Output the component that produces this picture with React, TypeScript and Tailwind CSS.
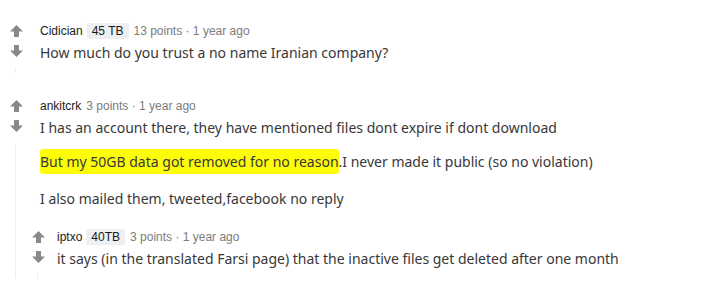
import type { ReactNode } from 'react'

const ARROW = '#878a8c'
const BODY = "text-[14px] leading-[21px] text-[#383838] font-['Noto_Sans',sans-serif]"

function Arrow({ down = false }: { down?: boolean }) {
  return (
    <svg width="13" height="12" viewBox="0 0 13 12" className={down ? 'rotate-180' : ''}>
      <path d="M6.5 0 L13 6.5 H9 V12 H4 V6.5 H0 Z" fill={ARROW} />
    </svg>
  )
}

function Votes() {
  return (
    <div className="flex w-6 shrink-0 flex-col items-center gap-[8px] pt-[2px]">
      <Arrow />
      <Arrow down />
    </div>
  )
}

function Meta({ user, flair, points }: { user: string; flair?: string; points: string }) {
  return (
    <div className="flex items-center text-[12px] leading-[16px] font-['Liberation_Sans',Arial,sans-serif]">
      <span className="text-[#1c1c1c]">{user}</span>
      {flair && (
        <span className="ml-[4px] rounded-[2px] bg-[#edeff1] px-[5px] text-[#1a1a1b]">{flair}</span>
      )}
      <span className="ml-[5px] text-[#7c7c7c]">{points} · 1 year ago</span>
    </div>
  )
}

function Comment({
  meta,
  gap,
  children,
}: {
  meta: ReactNode
  gap: string
  children: ReactNode
}) {
  return (
    <div className={`flex ${gap}`}>
      <Votes />
      <div className="flex flex-col">
        {meta}
        <div className={`mt-[3px] ${BODY}`}>{children}</div>
      </div>
    </div>
  )
}

export default function App() {
  return (
    <div className="h-[295px] w-[718px] overflow-hidden bg-white pl-[4px] pt-[23px]">
      <Comment gap="gap-[12px]" meta={<Meta user="Cidician" flair="45 TB" points="13 points" />}>
        <p>How much do you trust a no name Iranian company?</p>
      </Comment>
      <div className="ml-[11px] mt-[4px] h-[6px] w-[1px] bg-[#edeff1]" />

      <div className="mt-[25px]">
        <Comment gap="gap-[12px]" meta={<Meta user="ankitcrk" points="3 points" />}>
          <p>I has an account there, they have mentioned files dont expire if dont download</p>
        </Comment>
        <div className="flex">
          <div className="ml-[11px] mt-[6px] w-[1px] bg-[#edeff1]" />
          <div className="flex flex-col pl-[24px]">
            <p className={`mt-[13px] ${BODY}`}>
              <span className="rounded-[3px] bg-[#fdfd08] py-[3px]">
                But my 50GB data got removed for no reason
              </span>
              .I never made it public (so no violation)
            </p>
            <p className={`mt-[16px] ${BODY}`}>I also mailed them, tweeted,facebook no reply</p>
            <div className="ml-[-14px] mt-[20px]">
              <Comment gap="gap-[7px]" meta={<Meta user="iptxo" flair="40TB" points="3 points" />}>
                <p>it says (in the translated Farsi page) that the inactive files get deleted after one month</p>
              </Comment>
              <div className="ml-[11px] mt-[3px] h-[6px] w-[1px] bg-[#edeff1]" />
            </div>
          </div>
        </div>
      </div>
    </div>
  )
}
